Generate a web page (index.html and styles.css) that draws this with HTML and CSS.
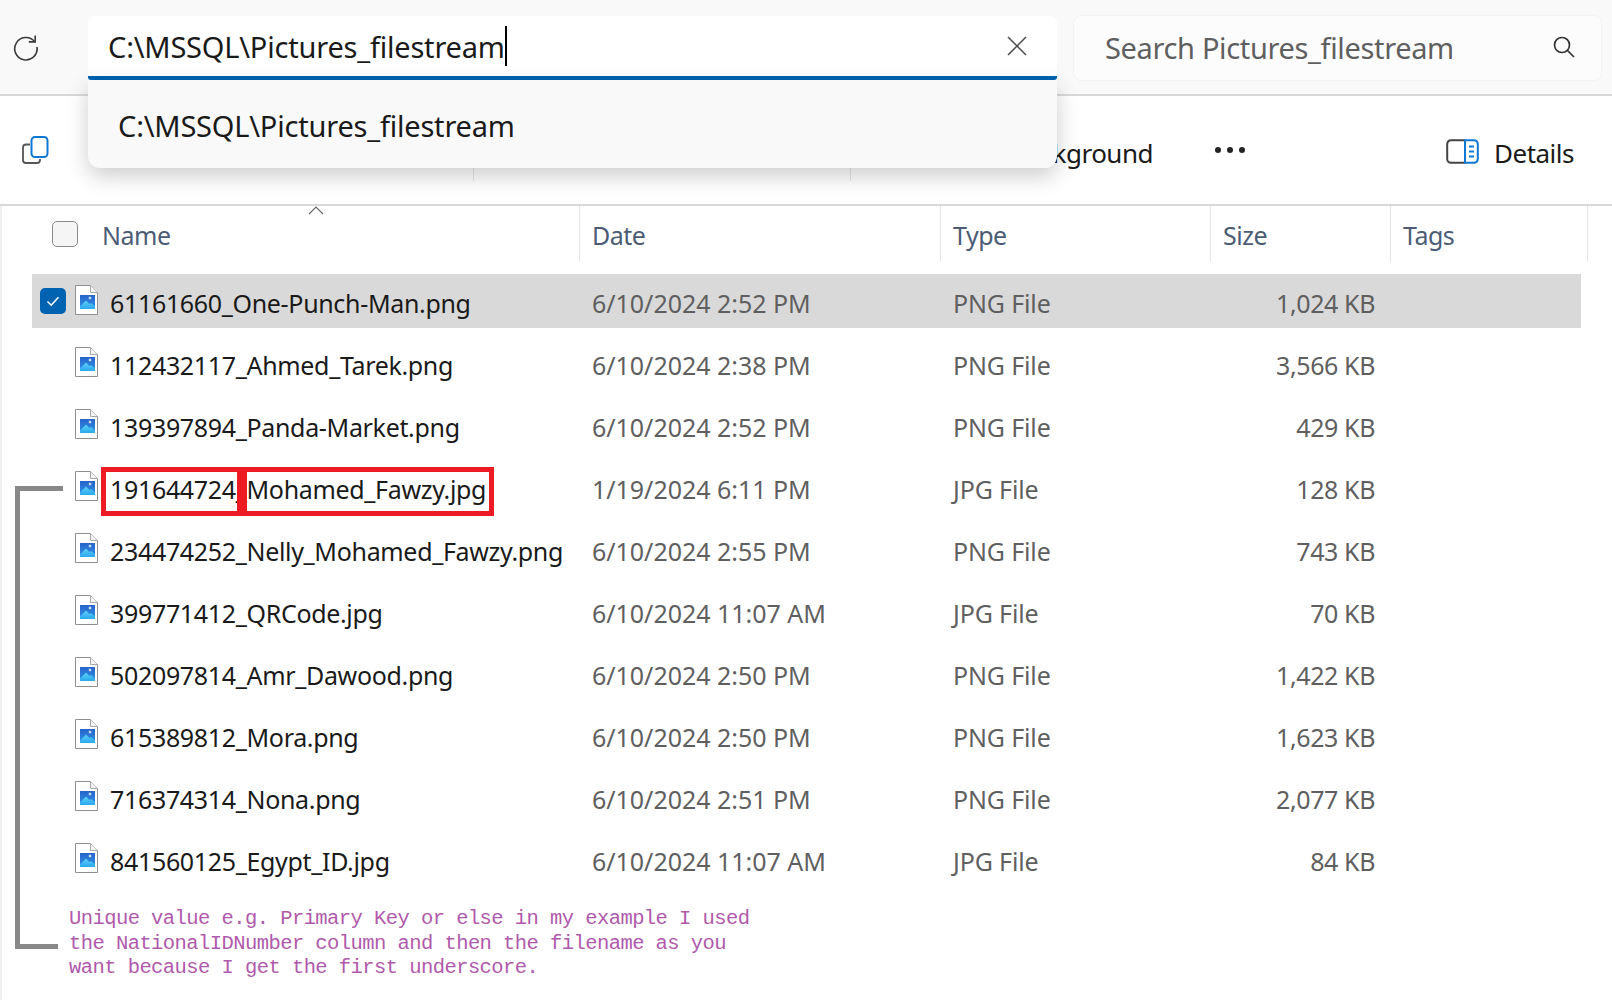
FILE: index.html
```html
<!DOCTYPE html>
<html lang="en">
<head>
  <meta charset="UTF-8" />
  <meta name="viewport" content="width=device-width, initial-scale=1.0" />
  <title>Pictures_filestream</title>
  <link rel="stylesheet" href="styles.css">
</head>
<body>
  <svg width="0" height="0" class="defs">
    <defs>
      <linearGradient id="sky" x1="0" y1="0" x2="0" y2="1">
        <stop offset="0" stop-color="#2763c9" />
        <stop offset="1" stop-color="#2f95ea" />
      </linearGradient>
      <linearGradient id="hill" x1="0" y1="0" x2="0" y2="1">
        <stop offset="0" stop-color="#5fd0f7" />
        <stop offset="1" stop-color="#29a8ee" />
      </linearGradient>
      <symbol id="file" viewBox="0 0 23 30">
        <path d="M.5.5h15l7 7v22H.5z" fill="#fff" stroke="#8f8f8f" />
        <path d="M15.5.5v7h7" fill="#f4f4f4" stroke="#a8a8a8" />
        <rect x="5" y="10" width="15" height="14" fill="url(#sky)" />
        <path d="M5 24v-2.500l6-6 3.500 3.500 1.500-1 4 3.500V24z" fill="url(#hill)" />
        <path d="M15 11l.6 1.400 1.400.6-1.400.6-.6 1.400-.6-1.400-1.400-.6 1.400-.6z" fill="#fff" />
      </symbol>
    </defs>
  </svg>

  <header class="topbar">
    <button class="refresh">
      <svg width="28" height="28" viewBox="0 0 28 28" fill="none" stroke="#3b3b3b" stroke-width="1.600">
        <path d="M22.500 8.500A11.200 11.200 0 1 0 25 14" />
        <path d="M23.200 2.500v6.400h-6.400" />
      </svg>
    </button>
    <div class="address">
      <div class="address-input">
        <span class="address-text">C:\MSSQL\Pictures_filestream</span><span class="caret"></span>
        <svg class="clear" width="22" height="22" viewBox="0 0 22 22" stroke="#4a4a4a" stroke-width="1.500">
          <path d="M2 2l18 18M20 2L2 20" />
        </svg>
      </div>
      <div class="suggest">C:\MSSQL\Pictures_filestream</div>
    </div>
    <div class="search">
      <span class="search-text">Search Pictures_filestream</span>
      <svg width="24" height="24" viewBox="0 0 24 24" fill="none" stroke="#333" stroke-width="1.700">
        <circle cx="10" cy="10" r="7.500" />
        <path d="M15.500 15.500L22 22" />
      </svg>
    </div>
  </header>

  <div class="toolbar">
    <svg class="copy-icon" width="30" height="30" viewBox="0 0 30 30" fill="none">
      <path d="M9 9.500H5a3 3 0 0 0-3 3V25a3 3 0 0 0 3 3h11a3 3 0 0 0 3-3v-1" stroke="#555" stroke-width="1.800" />
      <rect x="10.500" y="2" width="16" height="20" rx="3.500" stroke="#0f78d4" stroke-width="2" />
    </svg>
    <span class="tool-sep first"></span>
    <span class="tool-sep second"></span>
    <span class="tool-label wallpaper">Set as background</span>
    <span class="more"><i></i><i></i><i></i></span>
    <svg class="details-icon" width="33" height="25" viewBox="0 0 33 25" fill="none">
      <path d="M19 1.200H5A3.800 3.800 0 0 0 1.200 5v15A3.800 3.800 0 0 0 5 23.800h14" stroke="#444" stroke-width="2" />
      <path d="M19 1.200h9A3.800 3.800 0 0 1 31.800 5v15a3.800 3.800 0 0 1-3.800 3.800h-9z" stroke="#0f78d4" stroke-width="2" />
      <path d="M23 7.500h5M23 12.500h5M23 17.500h5" stroke="#0f78d4" stroke-width="2" />
    </svg>
    <span class="tool-label details">Details</span>
  </div>

  <main class="list">
    <div class="col-head">
      <div class="head-cell head-name"><span class="box"></span>Name</div>
      <div class="head-cell">Date</div>
      <div class="head-cell">Type</div>
      <div class="head-cell">Size</div>
      <div class="head-cell">Tags</div>
    </div>
    <svg class="sort-up" width="16" height="9" viewBox="0 0 16 9" fill="none" stroke="#666" stroke-width="1.200">
      <path d="M1 8l7-7 7 7" />
    </svg>

    <div class="row selected">
      <span class="box checked">
        <svg width="16" height="16" viewBox="0 0 16 16" fill="none" stroke="#fff" stroke-width="1.600"><path d="M2.500 8.500l3.700 3.700 7.300-8" /></svg>
      </span>
      <svg class="file"><use href="#file" /></svg>
      <span class="name">61161660_One-Punch-Man.png</span>
      <span class="meta date">6/10/2024 2:52 PM</span>
      <span class="meta">PNG File</span>
      <span class="meta size">1,024 KB</span>
    </div>
    <div class="row">
      <span></span><svg class="file"><use href="#file" /></svg>
      <span class="name">112432117_Ahmed_Tarek.png</span>
      <span class="meta date">6/10/2024 2:38 PM</span>
      <span class="meta">PNG File</span>
      <span class="meta size">3,566 KB</span>
    </div>
    <div class="row">
      <span></span><svg class="file"><use href="#file" /></svg>
      <span class="name">139397894_Panda-Market.png</span>
      <span class="meta date">6/10/2024 2:52 PM</span>
      <span class="meta">PNG File</span>
      <span class="meta size">429 KB</span>
    </div>
    <div class="row">
      <span></span><svg class="file"><use href="#file" /></svg>
      <span class="name">191644724_Mohamed_Fawzy.jpg</span>
      <span class="meta date">1/19/2024 6:11 PM</span>
      <span class="meta">JPG File</span>
      <span class="meta size">128 KB</span>
    </div>
    <div class="row">
      <span></span><svg class="file"><use href="#file" /></svg>
      <span class="name">234474252_Nelly_Mohamed_Fawzy.png</span>
      <span class="meta date">6/10/2024 2:55 PM</span>
      <span class="meta">PNG File</span>
      <span class="meta size">743 KB</span>
    </div>
    <div class="row">
      <span></span><svg class="file"><use href="#file" /></svg>
      <span class="name">399771412_QRCode.jpg</span>
      <span class="meta date">6/10/2024 11:07 AM</span>
      <span class="meta">JPG File</span>
      <span class="meta size">70 KB</span>
    </div>
    <div class="row">
      <span></span><svg class="file"><use href="#file" /></svg>
      <span class="name">502097814_Amr_Dawood.png</span>
      <span class="meta date">6/10/2024 2:50 PM</span>
      <span class="meta">PNG File</span>
      <span class="meta size">1,422 KB</span>
    </div>
    <div class="row">
      <span></span><svg class="file"><use href="#file" /></svg>
      <span class="name">615389812_Mora.png</span>
      <span class="meta date">6/10/2024 2:50 PM</span>
      <span class="meta">PNG File</span>
      <span class="meta size">1,623 KB</span>
    </div>
    <div class="row">
      <span></span><svg class="file"><use href="#file" /></svg>
      <span class="name">716374314_Nona.png</span>
      <span class="meta date">6/10/2024 2:51 PM</span>
      <span class="meta">PNG File</span>
      <span class="meta size">2,077 KB</span>
    </div>
    <div class="row">
      <span></span><svg class="file"><use href="#file" /></svg>
      <span class="name">841560125_Egypt_ID.jpg</span>
      <span class="meta date">6/10/2024 11:07 AM</span>
      <span class="meta">JPG File</span>
      <span class="meta size">84 KB</span>
    </div>

    <p class="note">Unique value e.g. Primary Key or else in my example I used<br>the NationalIDNumber column and then the filename as you<br>want because I get the first underscore.</p>
  </main>

  <!-- markup drawn on top of the screenshot -->
  <div class="mark-id"></div>
  <div class="mark-name"></div>
  <div class="bracket"></div>
</body>
</html>
```

FILE: styles.css
```css
* {
  margin: 0;
  padding: 0;
  box-sizing: border-box;
}

body {
  width: 1612px;
  height: 1000px;
  position: relative;
  overflow: hidden;
  background: #fff;
  font-family: "Noto Sans", sans-serif;
  color: #1a1a1a;
}

.defs {
  position: absolute;
}

.topbar {
  height: 96px;
  display: flex;
  align-items: flex-start;
  background: #f9f9f9;
  border-bottom: 2px solid #d9d9d9;
}

.refresh {
  width: 88px;
  height: 94px;
  padding-left: 12px;
  display: flex;
  align-items: center;
  border: none;
  background: none;
}

.address {
  width: 969px;
  margin-top: 16px;
  position: relative;
}

.address-input {
  height: 64px;
  display: flex;
  align-items: center;
  padding-left: 20px;
  background: #fff;
  border-radius: 8px 8px 3px 3px;
  border-bottom: 4px solid #0063b1;
  font-size: 29px;
  letter-spacing: -0.2px;
}

.caret {
  width: 2px;
  height: 40px;
  background: #000;
}

.clear {
  margin-left: auto;
  margin-right: 29px;
}

.suggest {
  position: absolute;
  top: 64px;
  left: 0;
  right: 0;
  height: 88px;
  padding-left: 30px;
  padding-top: 2px;
  display: flex;
  align-items: center;
  background: #f9f9f9;
  border-radius: 0 0 12px 12px;
  box-shadow: 0 8px 22px rgba(0, 0, 0, 0.2);
  font-size: 29px;
  letter-spacing: -0.2px;
  z-index: 2;
}

.search {
  width: 529px;
  height: 66px;
  margin: 15px 0 0 16px;
  padding: 0 25px 2px 31px;
  display: flex;
  align-items: center;
  justify-content: space-between;
  background: #fcfcfc;
  border: 1px solid #f3f3f3;
  border-radius: 8px;
  font-size: 29px;
  letter-spacing: -0.35px;
  color: #5f5f5f;
}

.toolbar {
  height: 110px;
  padding: 8px 0 2px 21px;
  display: flex;
  align-items: center;
  border-bottom: 2px solid #d9d9d9;
  font-size: 26px;
  letter-spacing: -0.5px;
}

.copy-icon {
  margin-top: -6px;
}

.tool-sep {
  width: 1px;
  height: 40px;
  align-self: flex-end;
  margin-bottom: 21px;
  background: #e5e5e5;
}

.tool-sep.first {
  margin-left: 422px;
}

.tool-sep.second {
  margin-left: 376px;
}

.wallpaper {
  width: 302px;
  text-align: right;
}

.more {
  display: flex;
  gap: 6px;
  margin: -6px 0 0 62px;
}

.more i {
  width: 6px;
  height: 6px;
  border-radius: 50%;
  background: #222;
}

.details-icon {
  margin: -4px 0 0 201px;
}

.details {
  margin-left: 15px;
}

.list {
  height: 794px;
  position: relative;
  border-left: 2px solid #f0f0f0;
}

.col-head {
  height: 56px;
  margin-left: -2px;
  margin-bottom: 12px;
  display: grid;
  grid-template-columns: 579px 361px 270px 180px 198px;
  font-size: 25px;
  letter-spacing: -0.5px;
  color: #4c5c75;
}

.head-cell {
  padding: 2px 0 0 12px;
  display: flex;
  align-items: center;
  border-left: 1px solid #e5e5e5;
}

.head-cell:last-child {
  border-right: 1px solid #e5e5e5;
}

.head-name {
  padding-left: 52px;
  border-left: none;
}

.head-name .box {
  margin: -3px 24px 0 0;
}

.sort-up {
  position: absolute;
  left: 306px;
  top: 0;
}

.box {
  width: 26px;
  height: 26px;
  border: 1.500px solid #8a8a8a;
  border-radius: 5px;
  background: #f5f5f5;
}

.box.checked {
  display: flex;
  align-items: center;
  justify-content: center;
  background: #0063b1;
  border: none;
}

.row {
  height: 54px;
  width: 1549px;
  margin: 0 0 7.970px 30px;
  padding-left: 8px;
  display: grid;
  grid-template-columns: 35px 35px 482px 361px 300px 122px;
  align-items: center;
  font-size: 25px;
  letter-spacing: -0.33px;
}

.row.selected {
  background: #d9d9d9;
}

.file {
  width: 23px;
  height: 30px;
  margin-top: -2px;
}

.name,
.meta {
  padding-top: 4px;
}

.meta {
  color: #5f5f5f;
  letter-spacing: -0.15px;
}

.date {
  letter-spacing: -0.02px;
}

.size {
  text-align: right;
  letter-spacing: -0.4px;
}

.note {
  margin-top: 21px;
  padding-left: 67px;
  font-family: "Liberation Mono", monospace;
  font-size: 20.500px;
  letter-spacing: -0.57px;
  line-height: 24.800px;
  color: #b05aab;
}

.mark-id,
.mark-name {
  position: absolute;
  top: 467px;
  height: 49px;
  border: 5px solid #ed1c24;
}

.mark-id {
  left: 101px;
  width: 141px;
}

.mark-name {
  left: 242px;
  width: 252px;
}

.bracket {
  position: absolute;
  left: 15px;
  top: 486px;
  width: 48px;
  height: 463px;
  border-left: 5px solid #888;
  border-top: 5px solid #888;
}

.bracket::after {
  content: "";
  position: absolute;
  left: 0;
  bottom: 0;
  width: 38px;
  height: 5px;
  background: #888;
}
```
